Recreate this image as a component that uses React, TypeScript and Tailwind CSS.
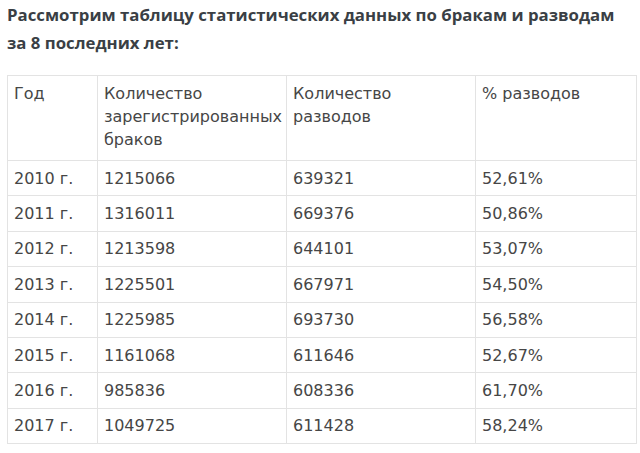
import React from "react";

const rows = [
  ["2010 г.", "1215066", "639321", "52,61%"],
  ["2011 г.", "1316011", "669376", "50,86%"],
  ["2012 г.", "1213598", "644101", "53,07%"],
  ["2013 г.", "1225501", "667971", "54,50%"],
  ["2014 г.", "1225985", "693730", "56,58%"],
  ["2015 г.", "1161068", "611646", "52,67%"],
  ["2016 г.", "985836", "608336", "61,70%"],
  ["2017 г.", "1049725", "611428", "58,24%"],
];

export default function App() {
  return (
    <div className="w-[640px] h-[453px] bg-white overflow-hidden px-[7px] pt-[1px]">
      <h2
        className="text-[16.8px] font-bold leading-[28px] text-[#3a3f45]"
        style={{ fontFamily: '"Open Sans", "Noto Sans", sans-serif' }}
      >
        Рассмотрим таблицу статистических данных по бракам и разводам за 8 последних лет:
      </h2>
      <table
        className="mt-[18px] w-[629px] border-collapse table-fixed text-[16px] leading-[23px] text-[#464646]"
        style={{ fontFamily: '"DejaVu Sans", "Noto Sans", sans-serif' }}
      >
        <colgroup>
          <col className="w-[90px]" />
          <col className="w-[189px]" />
          <col className="w-[189px]" />
          <col className="w-[161px]" />
        </colgroup>
        <thead>
          <tr>
            {["Год", "Количество зарегистрированных браков", "Количество разводов", "% разводов"].map((h) => (
              <td key={h} className="border border-[#e3e3e3] align-top px-[6px] pt-[6px] pb-[9px] font-normal">
                {h}
              </td>
            ))}
          </tr>
        </thead>
        <tbody>
          {rows.map((r) => (
            <tr key={r[0]} className="h-[35.4px]">
              {r.map((c, i) => (
                <td key={i} className="border border-[#e3e3e3] px-[6px] py-[5px] align-middle">
                  {c}
                </td>
              ))}
            </tr>
          ))}
        </tbody>
      </table>
    </div>
  );
}
